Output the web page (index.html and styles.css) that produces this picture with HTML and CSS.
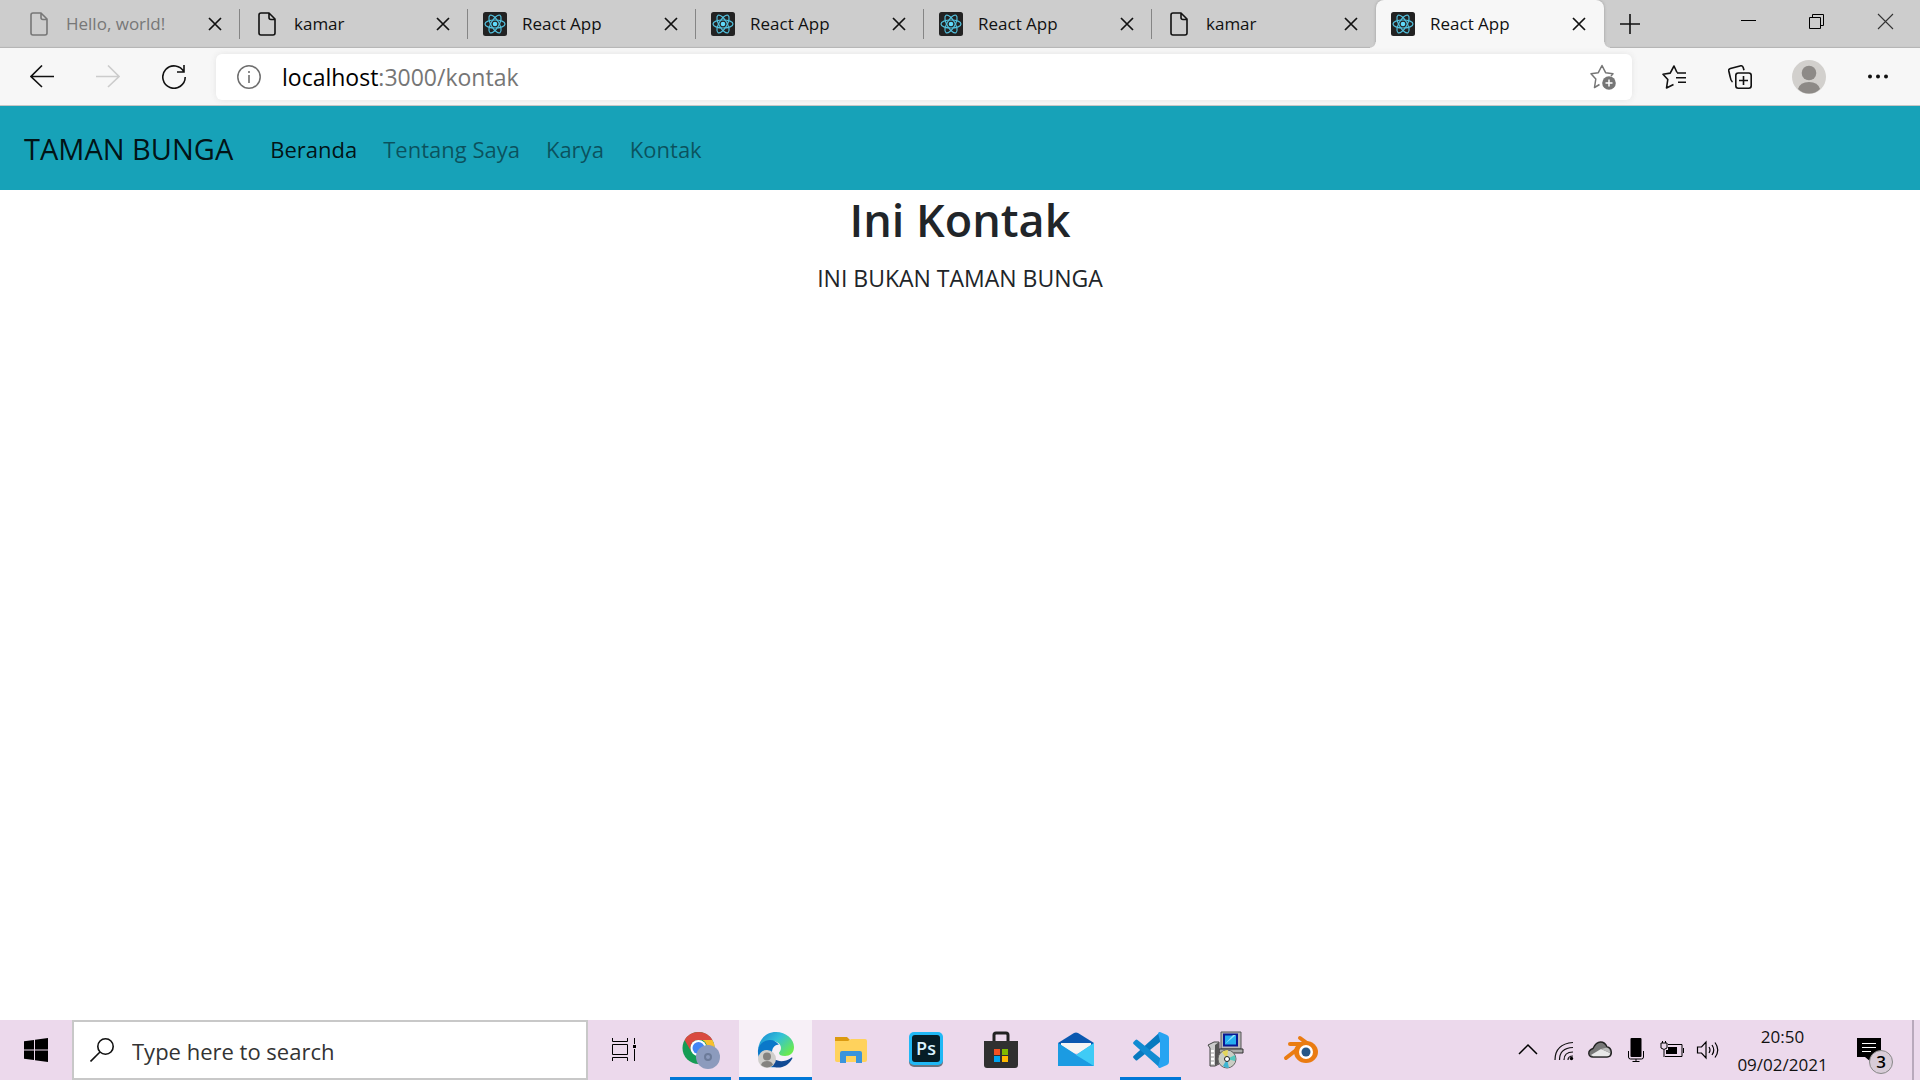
FILE: index.html
```html
<!DOCTYPE html>
<html lang="id">
<head>
<meta charset="utf-8">
<meta name="viewport" content="width=device-width, initial-scale=1">
<title>React App</title>
<link rel="stylesheet" href="styles.css">
</head>
<body>
<svg class="sprite" aria-hidden="true">
  <symbol id="file" viewBox="0 0 24 24"><path d="M6 1h8l6 6v14q0 2-2 2H6q-2 0-2-2V3q0-2 2-2zM14 1v4.500q0 2 2 2h4" fill="none" stroke="currentColor" stroke-width="1.600" stroke-linejoin="round"/></symbol>
  <symbol id="react" viewBox="0 0 24 24"><rect width="24" height="24" rx="2.500" fill="#222"/><g fill="none" stroke="#53c1de" stroke-width="1.200"><ellipse cx="12" cy="12" rx="10" ry="4"/><ellipse cx="12" cy="12" rx="10" ry="4" transform="rotate(60 12 12)"/><ellipse cx="12" cy="12" rx="10" ry="4" transform="rotate(120 12 12)"/></g><circle cx="12" cy="12" r="2.300" fill="#61dafb"/></symbol>
  <symbol id="close" viewBox="0 0 24 24"><path d="M6 6l12 12M18 6L6 18" stroke="currentColor" stroke-width="1.700" fill="none"/></symbol>
</svg>

<header class="browser">
  <div class="tab-strip">
    <div class="tab tab-dim"><svg class="icon"><use href="#file"/></svg><span class="tab-title">Hello, world!</span><button class="tab-close" aria-label="Close tab"><svg class="icon"><use href="#close"/></svg></button></div>
    <div class="tab"><svg class="icon"><use href="#file"/></svg><span class="tab-title">kamar</span><button class="tab-close" aria-label="Close tab"><svg class="icon"><use href="#close"/></svg></button></div>
    <div class="tab"><svg class="icon"><use href="#react"/></svg><span class="tab-title">React App</span><button class="tab-close" aria-label="Close tab"><svg class="icon"><use href="#close"/></svg></button></div>
    <div class="tab"><svg class="icon"><use href="#react"/></svg><span class="tab-title">React App</span><button class="tab-close" aria-label="Close tab"><svg class="icon"><use href="#close"/></svg></button></div>
    <div class="tab"><svg class="icon"><use href="#react"/></svg><span class="tab-title">React App</span><button class="tab-close" aria-label="Close tab"><svg class="icon"><use href="#close"/></svg></button></div>
    <div class="tab tab-last"><svg class="icon"><use href="#file"/></svg><span class="tab-title">kamar</span><button class="tab-close" aria-label="Close tab"><svg class="icon"><use href="#close"/></svg></button></div>
    <div class="tab tab-active"><svg class="icon"><use href="#react"/></svg><span class="tab-title">React App</span><button class="tab-close" aria-label="Close tab"><svg class="icon"><use href="#close"/></svg></button></div>
    <button class="new-tab" aria-label="New tab"><svg class="icon" viewBox="0 0 24 24"><path d="M12 2v20M2 12h20" stroke="#111" stroke-width="1.600"/></svg></button>
    <div class="window-controls">
      <button class="window-button" aria-label="Minimize"><svg class="icon" viewBox="0 0 24 24"><path d="M5 11.500h15" stroke="#000"/></svg></button>
      <button class="window-button" aria-label="Restore"><svg class="icon" viewBox="0 0 24 24"><path d="M4.500 8.500h11v11h-11zM7.500 8.500v-3h11v11h-3" fill="none" stroke="#000"/></svg></button>
      <button class="window-button" aria-label="Close"><svg class="icon" viewBox="0 0 24 24"><path d="M4 5l15 15M19 5L4 20" stroke="#333" stroke-width="1.100"/></svg></button>
    </div>
  </div>

  <div class="toolbar">
    <div class="nav-buttons">
      <button class="tool" aria-label="Back"><svg class="icon" viewBox="0 0 24 24"><path d="M24 11.500H1M12 .5l-11 11 11 10.500" fill="none" stroke="#111" stroke-width="1.600"/></svg></button>
      <button class="tool" aria-label="Forward"><svg class="icon" viewBox="0 0 24 24"><path d="M0 11.500h23M12 .5l11 11-11 10.500" fill="none" stroke="#ccc" stroke-width="1.600"/></svg></button>
      <button class="tool" aria-label="Refresh"><svg class="icon" viewBox="0 0 24 24"><path d="M22 7A11.200 11.200 0 1 0 23.200 12M22 0v7h-7" fill="none" stroke="#111" stroke-width="1.600"/></svg></button>
    </div>
    <div class="address">
      <svg class="icon" viewBox="0 0 24 24"><circle cx="12" cy="12" r="11.200" fill="none" stroke="#6e6e6e" stroke-width="1.500"/><path d="M12 10v8M12 6v2" stroke="#6e6e6e" stroke-width="1.600"/></svg>
      <div class="url" role="textbox" aria-label="Address" contenteditable="true" spellcheck="false"><span class="url-host">localhost</span>:3000/kontak</div>
      <button class="tool" aria-label="Add to favorites"><svg class="icon icon-wide" viewBox="0 0 26 26"><path d="M9.500 20.500L4.500 23.500 5.800 15 1 9.700l7.300-1L12 1.500l3.600 7.200 7.400 1-2 2.200" fill="none" stroke="#767676" stroke-width="1.500" stroke-linejoin="round"/><circle cx="19" cy="19" r="6.800" fill="#767676"/><path d="M19 15.500v7M15.500 19h7" stroke="#fff" stroke-width="1.500"/></svg></button>
    </div>
    <div class="tool-buttons">
      <button class="tool" aria-label="Favorites"><svg class="icon" viewBox="0 0 24 24"><path d="M11.500 19.500L4.500 23 5.800 14.500 1 9.300l7.200-1.200L12 1l3 6.500M15 8h9M14 12.700h10M16 17.300h8" fill="none" stroke="#111" stroke-width="1.600" stroke-linejoin="round"/></svg></button>
      <button class="tool" aria-label="Collections"><svg class="icon" viewBox="0 0 24 24"><path d="M4.500 17C3 16 2.500 14 2.200 12L.8 6Q.4 4 2.400 3.400L12 .9q2.500-.6 3.200 1.600l.8 2.700" fill="none" stroke="#111" stroke-width="1.600"/><rect x="7.800" y="8" width="15.400" height="15.200" rx="2.500" fill="none" stroke="#111" stroke-width="1.600"/><path d="M15.500 11v9M11 15.500h9" stroke="#111" stroke-width="1.600"/></svg></button>
      <button class="tool tool-profile" aria-label="Profile"><svg class="avatar" viewBox="0 0 34 34"><circle cx="17" cy="17" r="17" fill="#d2d0cd"/><circle cx="17" cy="13" r="7.300" fill="#8d8a87"/><path d="M6 29Q8 22 17 22t11 7q-4.500 4.500-11 4.500T6 29z" fill="#8d8a87"/></svg></button>
      <button class="tool" aria-label="Settings and more"><svg class="icon" viewBox="0 0 24 24"><circle cx="4" cy="11.500" r="2" fill="#111"/><circle cx="12" cy="11.500" r="2" fill="#111"/><circle cx="20" cy="11.500" r="2" fill="#111"/></svg></button>
    </div>
  </div>
</header>

<nav class="navbar">
  <a class="brand" href="#">TAMAN BUNGA</a>
  <a class="nav-link nav-current" href="#">Beranda</a>
  <a class="nav-link" href="#">Tentang Saya</a>
  <a class="nav-link" href="#">Karya</a>
  <a class="nav-link" href="#">Kontak</a>
</nav>

<main class="content">
  <h1 class="heading">Ini Kontak</h1>
  <p class="lead">INI BUKAN TAMAN BUNGA</p>
</main>

<footer class="taskbar">
  <button class="start" aria-label="Start"><svg class="icon" viewBox="0 0 24 24"><path d="M0 3.300L10 2v9.500H0zM11 1.800L24 0v11.500H11zM0 12.500h10V22L0 20.700zM11 12.500h13V24l-13-1.800z" fill="#000"/></svg></button>
  <label class="search">
    <svg class="icon" viewBox="0 0 24 24"><circle cx="15.500" cy="8.500" r="7.700" fill="none" stroke="#111" stroke-width="1.600"/><path d="M10 14L.5 23.500" stroke="#111" stroke-width="1.600"/></svg>
    <input class="search-input" type="text" placeholder="Type here to search" aria-label="Type here to search">
  </label>
  <button class="task-view" aria-label="Task view"><svg class="icon" viewBox="0 0 24 24"><path d="M.5 0v3.500h15V0M.5 6.500h15v10H.5zM.5 23v-3.500h15V23M22.500 0v6M22.500 11v12" fill="none" stroke="#000"/><path d="M21 7h3v3h-3z"/></svg></button>

  <div class="apps">
    <button class="app app-running" aria-label="Google Chrome"><svg class="app-icon" viewBox="0 0 38 38"><circle cx="16.500" cy="17" r="16" fill="#169c55"/><path d="M2.600 9A16 16 0 0 1 30.400 9H16.500a8 8 0 0 0-7 12z" fill="#d94a40"/><path d="M30.400 9A16 16 0 0 1 16.500 33l7-12a8 8 0 0 0-3-12z" fill="#f9bf2c"/><circle cx="16.500" cy="17" r="8" fill="#fff"/><circle cx="16.500" cy="17" r="6" fill="#4285f4"/><circle cx="26" cy="26" r="12" fill="#8c9bbd"/><circle cx="26" cy="26" r="3" fill="none" stroke="#6c7b99" stroke-width="2"/></svg></button>
    <button class="app app-current" aria-label="Microsoft Edge"><svg class="app-icon" viewBox="0 0 38 38"><defs><linearGradient id="edge-top" x1="0" y1="0" x2="1" y2=".7"><stop offset="0" stop-color="#1683d2"/><stop offset=".5" stop-color="#33c1d8"/><stop offset="1" stop-color="#6bea4e"/></linearGradient></defs><path d="M1 19C2 8 9 1 19 1s18 7 18 15c0 6-4 9-9 9-4 0-6-1-6-3 0-1 2-2 2-5 0-4-4-7-9-7C8 10 3 14 1 19z" fill="url(#edge-top)"/><path d="M1 19C2 13 7 9 13 9c4 0 7 2 9 5-4-1-7 3-7 8 0 7 5 10 9 12C10 41 0 31 1 19z" fill="#0b78c9"/><path d="M15 22c0 8 10 11 19 5 1-1 2 0 1 1-4 7-11 10-18 8-6-2-8-9-2-14z" fill="#114a94"/><circle cx="10" cy="28" r="9" fill="#d0cfcc"/><circle cx="10" cy="25.500" r="4" fill="#858380"/><path d="M4 34q1-4 6-4t6 4q-6 5-12 0z" fill="#858380"/></svg></button>
    <button class="app" aria-label="File Explorer"><svg class="app-icon" viewBox="0 0 38 38"><path d="M3 6h12l3 3-2 3H3z" fill="#dc9a10"/><path d="M3 10h13l3-2h14q2 0 2 2v19q0 2-2 2H5q-2 0-2-2z" fill="#ffd25c"/><path d="M8 32V22q0-2 2-2h18q2 0 2 2v10h-6v-7H14v7z" fill="#3a94dc"/></svg></button>
    <button class="app" aria-label="Photoshop"><svg class="app-icon" viewBox="0 0 38 38"><rect x="2" y="3" width="34" height="33" rx="5" fill="#6b7480"/><rect x="2" y="1" width="34" height="33" rx="5" fill="#20b8f5"/><rect x="5" y="4" width="28" height="27" rx="3" fill="#061d26"/><text class="ps-text" x="19" y="24" text-anchor="middle">Ps</text></svg></button>
    <button class="app" aria-label="Microsoft Store"><svg class="app-icon" viewBox="0 0 38 38"><path d="M12 12V4q0-2 2-2h10q2 0 2 2v8" fill="none" stroke="#222" stroke-width="3"/><path d="M2 10h34v24q0 3-3 3H5q-3 0-3-3z" fill="#303030"/><path d="M12 18h6v6h-6z" fill="#f25022"/><path d="M20 18h6v6h-6z" fill="#7fba00"/><path d="M12 25h6v6h-6z" fill="#00a4ef"/><path d="M20 25h6v6h-6z" fill="#ffb900"/></svg></button>
    <button class="app" aria-label="Mail"><svg class="app-icon" viewBox="0 0 38 38"><path d="M1 12L17 2q2-1 4 0l16 10v8H1z" fill="#0a58b0"/><path d="M4 12h30v10H4z" fill="#f4f4f4"/><path d="M1 12l18 12L37 12v23H1z" fill="#2bb5ef"/><path d="M1 12l36 23H1z" fill="#1b9be2"/><path d="M19 24l18-12v23z" fill="#3fcbf6"/></svg></button>
    <button class="app app-running" aria-label="Visual Studio Code"><svg class="app-icon" viewBox="0 0 38 38"><path d="M28 1L1.500 25q-1 1 0 2l2 2q1 1 2 0L28 11z" fill="#0879bf"/><path d="M28 37L1.500 13q-1-1 0-2l2-2q1-1 2 0L28 27z" fill="#108bd2"/><path d="M28 1l7 3q2 1 2 3v24q0 2-2 3l-7 3q-1 0-2-1l2-8V10l-2-8q1-1 2-1z" fill="#27a4f2"/></svg></button>
    <button class="app" aria-label="Setup"><svg class="app-icon" viewBox="0 0 38 38"><path d="M14 1h20v17H14z" fill="#b8b8b8" stroke="#555"/><path d="M17 3.500h13v11H17z" fill="#25aef0" stroke="#0a1894" stroke-width="2"/><path d="M18 13l8-9h3z" fill="#8be1fa"/><path d="M12 18h24v4H12z" fill="#aaa" stroke="#333"/><path d="M1 14l6-3h5v22l-4 2H3V17z" fill="#ccc" stroke="#444"/><path d="M8 14v21l4-3V11z" fill="#555"/><path d="M4 20h3M4 24h3M4 28h3M4 32h3" stroke="#fff" stroke-width="2"/><circle cx="20" cy="28" r="9" fill="#c9cdc4" stroke="#666"/><path d="M20 28l-5-7q3-2 6-2z" fill="#e4d65a"/><path d="M20 28l8-4q1 3 0 6z" fill="#54c8be"/><path d="M20 28l2 9q-4 0-6-2z" fill="#3db5d2"/><circle cx="20" cy="28" r="2.500" fill="#fff" stroke="#222"/></svg></button>
    <button class="app" aria-label="Blender"><svg class="app-icon" viewBox="0 0 38 38"><path d="M4 27L22 13M8 13h16M18 7l11 8" fill="none" stroke="#ea7c12" stroke-width="4" stroke-linecap="round"/><ellipse cx="24" cy="21" rx="12" ry="11" fill="#ea7c12"/><circle cx="24" cy="21" r="7" fill="#fff"/><circle cx="24" cy="21" r="4.500" fill="#265787"/></svg></button>
  </div>

  <div class="tray">
    <button class="tray-button" aria-label="Show hidden icons"><svg class="icon" viewBox="0 0 24 24"><path d="M3 16l9-9 9 9" fill="none" stroke="#000" stroke-width="1.500"/></svg></button>
    <button class="tray-button" aria-label="Network"><svg class="icon" viewBox="0 0 24 24"><g fill="none" stroke="#111" stroke-width="1.200"><path d="M3 22Q3 6 21 4.500"/><path d="M7.500 22Q7.500 10 21 9.500"/><path d="M12 22q0-8 9-8"/><path d="M16 22q0-4 5-4"/></g><circle cx="19.500" cy="20.500" r="1.700"/></svg></button>
    <button class="tray-button" aria-label="OneDrive"><svg class="icon" viewBox="0 0 24 24"><path d="M5 19Q1 19 .8 15.500T5 10.500Q8 4 12.500 4T19 9q4 .5 4.300 5T19 19z" fill="#777" stroke="#222" stroke-width="1.400"/><path d="M3 17l10-6 9 4q0 3.300-3 3.300H5z" fill="#e8e8e8"/><path d="M13 11l6-1.500q3 1 3.300 5.500z" fill="#bbb"/></svg></button>
    <button class="tray-button" aria-label="Microphone"><svg class="icon" viewBox="0 0 24 24"><rect x="6.500" width="11" height="19" rx="1"/><path d="M4.500 13v6q0 2 2 2h11q2 0 2-2v-6M12 21v3M8.500 23.500h7" fill="none" stroke="#000"/></svg></button>
    <button class="tray-button" aria-label="Battery"><svg class="icon" viewBox="0 0 24 24"><path d="M8 6.500h14v12H5M23.500 10v5M4 12v7M1 5h6v5q-3 3-6 0zM2.500 3v2M5.500 3v2" fill="none" stroke="#000"/><path d="M8 9h9v7H6v-4h2z"/></svg></button>
    <button class="tray-button" aria-label="Volume"><svg class="icon" viewBox="0 0 24 24"><path d="M1.500 9h4L10 4v16l-4.500-5h-4zM13 9q2 3 0 6M16 7q3.500 5 0 10M19 4.500q5.500 7.500 0 15" fill="none" stroke="#000" stroke-width="1.200"/></svg></button>
  </div>
  <div class="clock"><time>20:50</time><time>09/02/2021</time></div>
  <button class="notifications" aria-label="Notifications"><svg class="icon" viewBox="0 0 24 24"><path d="M0 0h24v19H14v5l-6-5H0z"/><path d="M5 5.500h14M5 9.500h14M5 13.500h9" stroke="#fff"/></svg><span class="badge">3</span></button>
  <button class="show-desktop" aria-label="Show desktop"></button>
</footer>
</body>
</html>
```
FILE: styles.css
```css
* {
  box-sizing: border-box;
}

body {
  display: flex;
  flex-direction: column;
  min-height: 100vh;
  margin: 0;
  background: #fff;
  color: #212529;
  font-family: "Open Sans", "Noto Sans", sans-serif;
  font-size: 22px;
}

button {
  display: flex;
  align-items: center;
  justify-content: center;
  padding: 0;
  border: 0;
  background: none;
  font: inherit;
  color: inherit;
}

a {
  text-decoration: none;
}

.sprite {
  display: none;
}

.icon {
  display: block;
  flex: none;
  width: 24px;
  height: 24px;
}

.icon-wide {
  width: 26px;
  height: 26px;
}

/* Browser tabs */

.tab-strip {
  display: flex;
  height: 48px;
  padding-left: 12px;
  background: #cdcdcd;
  box-shadow: inset 0 -2px 1px -1px #b4b4b4;
}

.tab {
  position: relative;
  display: flex;
  flex: 0 1 228px;
  align-items: center;
  gap: 15px;
  min-width: 0;
  padding: 0 13px 0 15px;
  color: #111;
  font-size: 17px;
  line-height: 24px;
}

.tab::after {
  content: "";
  position: absolute;
  top: 9px;
  right: 0;
  width: 1px;
  height: 30px;
  background: #858585;
}

.tab-dim {
  color: #777;
}

.tab-title {
  flex: 1;
  overflow: hidden;
  white-space: nowrap;
}

.tab-close {
  color: #111;
}

.tab-last {
  flex-basis: 224px;
}

.tab-last::after {
  display: none;
}

.tab-active {
  border-radius: 8px 8px 0 0;
  background: #f7f7f7;
  box-shadow: 0 0 3px #999;
  clip-path: inset(0 -8px);
}

.tab-active::before,
.tab-active::after {
  content: "";
  position: absolute;
  top: auto;
  bottom: 0;
  width: 6px;
  height: 6px;
}

.tab-active::before {
  left: -6px;
  background: radial-gradient(circle at 0 0, transparent 5px, #f7f7f7 6px);
}

.tab-active::after {
  right: -6px;
  background: radial-gradient(circle at 100% 0, transparent 5px, #f7f7f7 6px);
}

.new-tab {
  width: 52px;
}

.window-controls {
  display: flex;
  height: 42px;
  margin-left: auto;
}

.window-button {
  width: 69px;
}

/* Browser toolbar */

.toolbar {
  display: flex;
  align-items: center;
  height: 58px;
  padding: 0 30px;
  border-bottom: 1px solid #c6c6c6;
  background: #f7f7f7;
}

.nav-buttons {
  display: flex;
  gap: 42px;
}

.address {
  display: flex;
  flex: 1;
  align-items: center;
  height: 46px;
  margin: 0 30px;
  padding: 0 16px 0 21px;
  border-radius: 6px;
  background: #fff;
  box-shadow: 0 0 6px #e4e4e4;
}

.url {
  flex: 1;
  padding-left: 21px;
  outline: 0;
  color: #767676;
  font-size: 23px;
  line-height: 32px;
}

.url-host {
  color: #000;
}

.tool-buttons {
  display: flex;
  align-items: center;
  gap: 42px;
}

.avatar {
  display: block;
  width: 34px;
  height: 34px;
}

.tool-profile {
  margin: 0 -2px;
}

/* Page */

.navbar {
  display: flex;
  align-items: center;
  min-height: 84px;
  padding: 2px 24px 0;
  background: #17a2b8;
}

.brand {
  margin-right: 24px;
  color: rgba(0, 0, 0, 0.9);
  font-size: 29px;
  line-height: 44px;
}

.nav-link {
  padding: 0 13px;
  color: rgba(0, 0, 0, 0.5);
  line-height: 36px;
}

.nav-current {
  color: rgba(0, 0, 0, 0.9);
}

.content {
  flex: 1;
  text-align: center;
}

.heading {
  margin: 0 0 10px;
  font-size: 45px;
  font-weight: 600;
  line-height: 60px;
}

.lead {
  margin: 0;
  font-size: 23px;
  line-height: 36px;
}

/* Taskbar */

.taskbar {
  display: flex;
  height: 60px;
  background: #ecd9ec;
  color: #111;
}

.start {
  width: 72px;
}

.search {
  display: flex;
  flex: 0 1 516px;
  align-items: center;
  gap: 18px;
  padding: 0 16px;
  border: 2px solid #c8c8c8;
  background: #fff;
}

.search-input {
  flex: 1;
  min-width: 0;
  padding: 2px 0 0;
  border: 0;
  outline: 0;
  background: none;
  font: inherit;
  line-height: 32px;
}

.search-input::placeholder {
  color: #333;
  opacity: 1;
}

.task-view {
  width: 72px;
  margin-right: 4px;
}

.apps {
  display: flex;
  gap: 2px;
}

.app {
  position: relative;
  width: 73px;
}

.app-icon {
  display: block;
  width: 38px;
  height: 38px;
}

.app-running::after,
.app-current::after {
  content: "";
  position: absolute;
  right: 6px;
  bottom: 0;
  left: 6px;
  height: 3px;
  background: #0078d7;
}

.app-current {
  background: #f7f0f7;
}

.app-current::after {
  right: 0;
  left: 0;
}

.ps-text {
  fill: #d9f3ff;
  font-size: 18px;
  font-weight: 600;
}

.tray {
  display: flex;
  gap: 12px;
  margin-left: auto;
}

.clock {
  display: flex;
  flex-direction: column;
  align-items: center;
  width: 125px;
  padding-top: 3px;
  font-size: 17px;
  line-height: 28px;
}

.notifications {
  position: relative;
  width: 48px;
}

.badge {
  position: absolute;
  right: 0;
  bottom: 6px;
  width: 24px;
  height: 24px;
  border: 1px solid #888;
  border-radius: 50%;
  background: #d8ccd8;
  color: #000;
  font-size: 17px;
  font-weight: 600;
  line-height: 22px;
}

.show-desktop {
  width: 8px;
  margin-left: 19px;
  border-left: 2px solid #b9a9bc;
}
```
